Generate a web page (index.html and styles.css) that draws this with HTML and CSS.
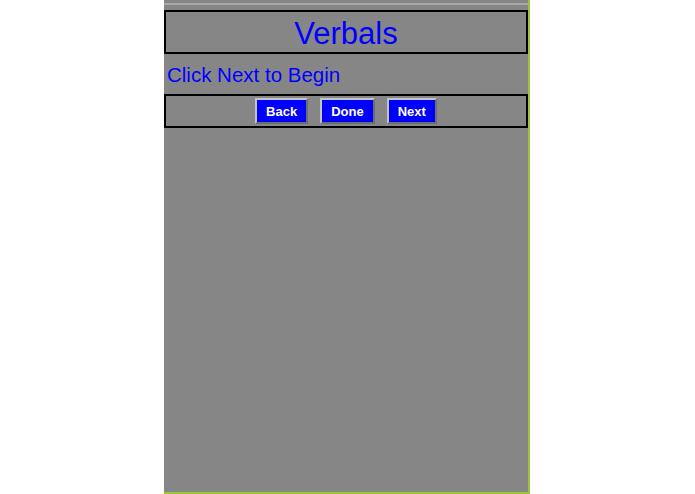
FILE: index.html
```html
<!DOCTYPE html>
<html>
<head>
<meta charset="utf-8">
<link rel="stylesheet" href="styles.css">
</head>
<body>
<div class="panel">
  <div class="topbar"></div>
  <div class="header"><h1 class="title">Verbals</h1></div>
  <p class="prompt">Click Next to Begin</p>
  <div class="controls">
    <button class="btn">Back</button>
    <button class="btn">Done</button>
    <button class="btn">Next</button>
  </div>
</div>
</body>
</html>
```
FILE: styles.css
```css
html, body {
  margin: 0;
  padding: 0;
  background: #ffffff;
}
body {
  font-family: "Liberation Sans", Arial, sans-serif;
}
.panel {
  margin-left: 164px;
  width: 364px;
  height: 492px;
  background: #868686;
  border-right: 2px solid #9cc43c;
  border-bottom: 2px solid #9cc43c;
}
.topbar {
  height: 3px;
  border-bottom: 2px solid #a9a9a9;
  margin-bottom: 5px;
}
.header {
  border: 2px solid #000;
  height: 40px;
  display: flex;
  align-items: center;
  justify-content: center;
}
.title {
  margin: 2px 0 0;
  font-size: 31px;
  font-weight: normal;
  color: #0000ff;
  line-height: 1;
}
.prompt {
  margin: 0;
  padding: 9px 3px 8px;
  font-size: 20.5px;
  line-height: 23px;
  color: #0000ff;
}
.controls {
  border: 2px solid #000;
  height: 30px;
  display: flex;
  align-items: center;
  justify-content: center;
  gap: 12px;
}
.btn {
  height: 26px;
  padding: 0 9px;
  background: #0000ff;
  color: #ffffff;
  font-family: "Liberation Sans", Arial, sans-serif;
  font-weight: bold;
  font-size: 13px;
  border: 2px solid;
  border-color: #c4c4c4 #6e6e6e #6e6e6e #c4c4c4;
  margin: 0;
}
```
